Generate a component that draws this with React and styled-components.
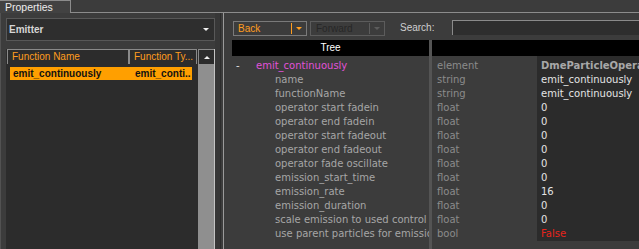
import React from "react";
import styled, { createGlobalStyle } from "styled-components";

const Global = createGlobalStyle`
  body {
    margin: 0;
    background: #3c3c3c;
  }
`;

const Frame = styled.div`
  width: 639px;
  height: 249px;
  display: flex;
  flex-direction: column;
  overflow: hidden;
  background: #3c3c3c;
  font-family: "Liberation Sans", Arial, sans-serif;
  font-size: 10px;
`;

const TabStrip = styled.div`
  display: flex;
  height: 13px;
  flex-shrink: 0;
`;

const Tab = styled.div`
  width: 71px;
  box-sizing: border-box;
  border-top: 1px solid #8c8c8c;
  border-right: 1px solid #8c8c8c;
  background: #424242;
  color: #ececec;
  padding-left: 5px;
  line-height: 12px;
  font-size: 10.5px;
`;

const TabRest = styled.div`
  flex: 1;
  border-bottom: 1px solid #8c8c8c;
`;

const Body = styled.div`
  flex: 1;
  display: flex;
  min-height: 0;
  border-left: 1px solid #525252;
`;

const LeftPanel = styled.div`
  width: 214px;
  flex-shrink: 0;
  box-sizing: border-box;
  padding: 5px 0 0 5px;
  display: flex;
  flex-direction: column;
`;

const Dropdown = styled.div`
  height: 23px;
  box-sizing: border-box;
  border: 1px solid #585858;
  background: #2e2e2e;
  display: flex;
  align-items: center;
  justify-content: space-between;
  padding: 0 5px 0 2px;
  font-weight: bold;
  color: #d6d6d6;
`;

const Caret = styled.span`
  width: 0;
  height: 0;
  border-left: 3px solid transparent;
  border-right: 3px solid transparent;
  border-${p => (p.up ? "bottom" : "top")}: 3px solid ${p => p.color || "#f0f0f0"};
`;

const Table = styled.div`
  margin-top: 8px;
  flex: 1;
  display: flex;
  min-height: 0;
`;

const TableMain = styled.div`
  width: 192px;
  background: #2c2c2c;
  display: flex;
  flex-direction: column;
`;

const HeadRow = styled.div`
  display: flex;
  height: 15px;
  padding-left: 1px;
`;

const HeadCell = styled.div`
  width: ${p => p.w}px;
  box-sizing: border-box;
  border: 1px solid #8a8a8a;
  border-bottom: none;
  color: #ff9d1e;
  padding-left: 4px;
  line-height: 14px;
  white-space: nowrap;
  overflow: hidden;
`;

const SelRow = styled.div`
  margin: 3px 6px 0 4px;
  height: 13px;
  display: flex;
  background: #ff9f00;
  color: #111;
  font-weight: bold;
  line-height: 13px;
  white-space: nowrap;
`;

const SelCell = styled.div`
  width: ${p => (p.w ? `${p.w}px` : "auto")};
  flex: ${p => (p.w ? "none" : 1)};
  padding-left: ${p => p.pad || 0}px;
  box-sizing: border-box;
  overflow: hidden;
`;

const ScrollBar = styled.div`
  width: 17px;
  box-sizing: border-box;
  border-right: 1px solid #c4c4c4;
  display: flex;
  flex-direction: column;
`;

const ScrollUp = styled.div`
  height: 15px;
  box-sizing: border-box;
  border: 1px solid #8a8a8a;
  border-right: none;
  border-bottom: none;
  background: #2c2c2c;
  display: flex;
  align-items: center;
  justify-content: center;
`;

const ScrollTrack = styled.div`
  flex: 1;
  background: #8f8f8f;
`;

const Splitter = styled.div`
  width: 9px;
  flex-shrink: 0;
  background: linear-gradient(
    to right,
    #373737 0 5px,
    #2c2c2c 5px 6px,
    #3c3c3c 6px 8px,
    #9a9a9a 8px 9px
  );
`;

const RightPanel = styled.div`
  flex: 1;
  min-width: 0;
  display: flex;
  flex-direction: column;
  padding: 7px 0 0 8px;
`;

const Toolbar = styled.div`
  display: flex;
  align-items: flex-start;
  height: 16px;
  padding-left: 1px;
  flex-shrink: 0;
`;

const Combo = styled.div`
  width: ${p => p.w}px;
  height: 15px;
  margin: 1px ${p => p.gap || 0}px 0 0;
  box-sizing: border-box;
  border: 1px solid ${p => p.edge};
  display: flex;
  align-items: center;
  padding-left: ${p => p.pad}px;
  color: ${p => p.ink};
  line-height: 13px;
`;

const ComboSep = styled.span`
  margin-left: auto;
  width: 1px;
  height: 11px;
  background: ${p => p.color};
`;

const ComboArrow = styled.span`
  margin: 0 4px;
  display: flex;
`;

const SearchLabel = styled.span`
  margin-left: 15px;
  color: #cfcfcf;
  line-height: 16px;
`;

const SearchBox = styled.div`
  flex: 1;
  height: 15px;
  margin-left: 18px;
  box-sizing: border-box;
  border-top: 1px solid #8a8a8a;
  border-left: 1px solid #8a8a8a;
  background: #2e2e2e;
`;

const Tree = styled.div`
  margin-top: 4px;
  flex: 1;
  display: flex;
  flex-direction: column;
  min-height: 0;
  font-family: "DejaVu Sans", Verdana, sans-serif;
  font-size: 10px;
`;

const TreeRow = styled.div`
  display: grid;
  grid-template-columns: 197px 3px 105px 1fr;
  height: ${p => (p.h ? `${p.h}px` : "auto")};
  flex: ${p => (p.h ? "none" : 1)};
  line-height: ${p => p.h || 14}px;
  white-space: nowrap;
`;

const Split = styled.div`
  background: #545454;
`;

const HeadBlack = styled.div`
  background: #000;
  color: #fff;
  text-align: center;
  font-family: "Liberation Sans", Arial, sans-serif;
`;

const NameCell = styled.div`
  padding-left: ${p => p.indent}px;
  overflow: hidden;
  color: ${p => p.color || "#a6a6a6"};
  display: flex;
`;

const Expander = styled.span`
  width: 20px;
  color: #e0e0e0;
`;

const TypeCell = styled.div`
  padding-left: 5px;
  overflow: hidden;
  color: #8b8b8b;
`;

const ValueCell = styled.div`
  padding-left: 4px;
  overflow: hidden;
  background: #2b2b2b;
  color: ${p => p.color || "#e4e4e4"};
  font-weight: ${p => (p.bold ? "bold" : "normal")};
`;

const props = [
  ["name", "string", "emit_continuously"],
  ["functionName", "string", "emit_continuously"],
  ["operator start fadein", "float", "0"],
  ["operator end fadein", "float", "0"],
  ["operator start fadeout", "float", "0"],
  ["operator end fadeout", "float", "0"],
  ["operator fade oscillate", "float", "0"],
  ["emission_start_time", "float", "0"],
  ["emission_rate", "float", "16"],
  ["emission_duration", "float", "0"],
  ["scale emission to used control points", "float", "0"],
  ["use parent particles for emission scaling", "bool", "False"],
];

export default function App() {
  return (
    <Frame>
      <Global />
      <TabStrip>
        <Tab>Properties</Tab>
        <TabRest />
      </TabStrip>
      <Body>
        <LeftPanel>
          <Dropdown>
            Emitter
            <Caret />
          </Dropdown>
          <Table>
            <TableMain>
              <HeadRow>
                <HeadCell w={122}>Function Name</HeadCell>
                <HeadCell w={68}>Function Ty...</HeadCell>
              </HeadRow>
              <SelRow>
                <SelCell w={125} pad={3}>emit_continuously</SelCell>
                <SelCell>emit_conti..</SelCell>
              </SelRow>
            </TableMain>
            <ScrollBar>
              <ScrollUp>
                <Caret up />
              </ScrollUp>
              <ScrollTrack />
            </ScrollBar>
          </Table>
        </LeftPanel>
        <Splitter />
        <RightPanel>
          <Toolbar>
            <Combo w={74} gap={3} pad={4} edge="#7a7a7a" ink="#ff9d1e">
              Back
              <ComboSep color="#ff9d1e" />
              <ComboArrow>
                <Caret color="#ff9d1e" />
              </ComboArrow>
            </Combo>
            <Combo w={75} pad={5} edge="#5c5c5c" ink="#272727">
              Forward
              <ComboSep color="#5c5c5c" />
              <ComboArrow>
                <Caret color="#5c5c5c" />
              </ComboArrow>
            </Combo>
            <SearchLabel>Search:</SearchLabel>
            <SearchBox />
          </Toolbar>
          <Tree>
            <TreeRow h={16}>
              <HeadBlack>Tree</HeadBlack>
              <Split />
              <HeadBlack />
              <HeadBlack />
            </TreeRow>
            <TreeRow h={3}>
              <div />
              <Split />
              <div />
              <ValueCell />
            </TreeRow>
            <TreeRow h={14}>
              <NameCell indent={4} color="#e052d8">
                <Expander>-</Expander>
                emit_continuously
              </NameCell>
              <Split />
              <TypeCell>element</TypeCell>
              <ValueCell bold color="#a8a8a8">
                DmeParticleOperator
              </ValueCell>
            </TreeRow>
            {props.map(([name, type, value]) => (
              <TreeRow h={14} key={name}>
                <NameCell indent={43}>{name}</NameCell>
                <Split />
                <TypeCell>{type}</TypeCell>
                <ValueCell color={value === "False" ? "#e8241c" : undefined}>
                  {value}
                </ValueCell>
              </TreeRow>
            ))}
            <TreeRow>
              <div />
              <Split />
              <div />
              <div />
            </TreeRow>
          </Tree>
        </RightPanel>
      </Body>
    </Frame>
  );
}
